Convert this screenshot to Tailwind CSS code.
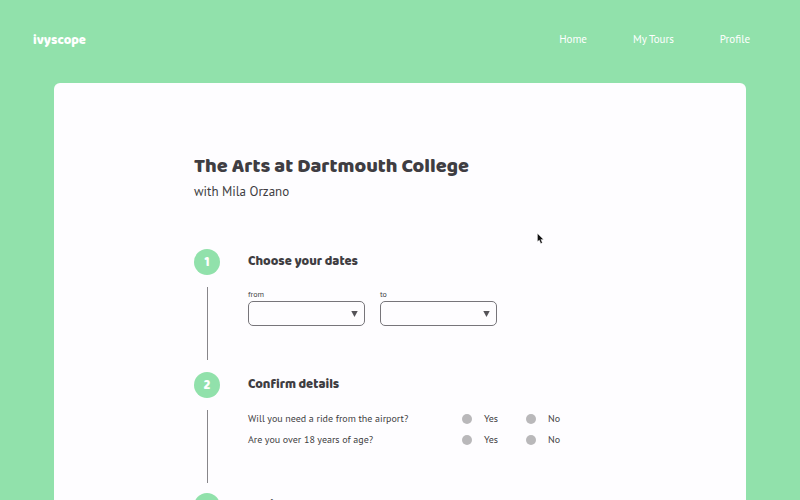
<!DOCTYPE html>
<html lang="en">
<head>
<meta charset="utf-8">
<meta name="viewport" content="width=device-width, initial-scale=1">
<title>ivyscope</title>
<script src="https://cdn.jsdelivr.net/npm/@tailwindcss/browser@4"></script>
</head>
<body class="relative flex h-screen flex-col overflow-hidden bg-[#91e1ab] font-['PT_Sans','Lato',sans-serif] text-[#3f3d42]">
<header class="flex items-center justify-between pt-[27px] pr-[50px] pb-8 pl-[33px] text-white">
  <a href="#" class="pt-[3px] font-['Baloo_2','Baloo','Lato',sans-serif] text-[13px] leading-5 font-extrabold">ivyscope</a>
  <nav class="flex gap-[46px] text-[11px] leading-6">
    <a href="#">Home</a>
    <a href="#">My Tours</a>
    <a href="#">Profile</a>
  </nav>
</header>
<main class="mx-[54px] grow rounded-t-md bg-[#fefdff] px-[140px] pt-[69px]">
  <h1 class="font-['Baloo_2','Baloo','Lato',sans-serif] text-[20px] leading-7 font-extrabold whitespace-nowrap">The Arts at Dartmouth College</h1>
  <p class="text-[13px] leading-6">with Mila Orzano</p>
  <ol class="mt-[45px]">
    <li class="flex h-[123px] gap-7">
      <div class="flex w-[26px] shrink-0 flex-col items-center gap-3">
        <span class="flex size-[26px] items-center justify-center rounded-full bg-[#91e1ab] pt-0.5 font-['Baloo_2','Baloo','Lato',sans-serif] text-[13px] font-extrabold text-white">1</span>
        <span class="h-[73px] w-px bg-[#88868a]"></span>
      </div>
      <section>
        <h2 class="pt-px font-['Baloo_2','Baloo','Lato',sans-serif] text-[13px] leading-6 font-extrabold">Choose your dates</h2>
        <div class="mt-[14px] flex gap-[15px]">
          <div class="relative w-[117px]">
            <label for="from" class="block text-[8px] leading-3">from</label>
            <select id="from" class="mt-px block h-[25px] w-full appearance-none rounded-[5px] border border-[#77757a] px-2 text-[11px]"><option></option></select>
            <svg class="pointer-events-none absolute right-[7px] bottom-[9px] h-[6px] w-[7px]" viewBox="0 0 7 6"><path d="M.3 0H6.7L3.5 6Z" fill="#555358"/></svg>
          </div>
          <div class="relative w-[117px]">
            <label for="to" class="block text-[8px] leading-3">to</label>
            <select id="to" class="mt-px block h-[25px] w-full appearance-none rounded-[5px] border border-[#77757a] px-2 text-[11px]"><option></option></select>
            <svg class="pointer-events-none absolute right-[7px] bottom-[9px] h-[6px] w-[7px]" viewBox="0 0 7 6"><path d="M.3 0H6.7L3.5 6Z" fill="#555358"/></svg>
          </div>
        </div>
      </section>
    </li>
    <li class="flex h-[121px] gap-7">
      <div class="flex w-[26px] shrink-0 flex-col items-center gap-3">
        <span class="flex size-[26px] items-center justify-center rounded-full bg-[#91e1ab] pt-0.5 font-['Baloo_2','Baloo','Lato',sans-serif] text-[13px] font-extrabold text-white">2</span>
        <span class="h-[73px] w-px bg-[#88868a]"></span>
      </div>
      <section>
        <h2 class="pt-px font-['Baloo_2','Baloo','Lato',sans-serif] text-[13px] leading-6 font-extrabold">Confirm details</h2>
        <div class="mt-[11px] text-[10px] leading-[21px]">
          <fieldset class="flex">
            <legend class="float-left w-[214px]">Will you need a ride from the airport?</legend>
            <label class="flex w-[64px] items-center gap-3"><input type="radio" name="ride" class="size-[10px] appearance-none rounded-full bg-[#b9b8ba] checked:bg-[#91e1ab]">Yes</label>
            <label class="flex items-center gap-3"><input type="radio" name="ride" class="size-[10px] appearance-none rounded-full bg-[#b9b8ba] checked:bg-[#91e1ab]">No</label>
          </fieldset>
          <fieldset class="flex">
            <legend class="float-left w-[214px]">Are you over 18 years of age?</legend>
            <label class="flex w-[64px] items-center gap-3"><input type="radio" name="age" class="size-[10px] appearance-none rounded-full bg-[#b9b8ba] checked:bg-[#91e1ab]">Yes</label>
            <label class="flex items-center gap-3"><input type="radio" name="age" class="size-[10px] appearance-none rounded-full bg-[#b9b8ba] checked:bg-[#91e1ab]">No</label>
          </fieldset>
        </div>
      </section>
    </li>
    <li class="flex gap-7">
      <span class="flex size-[26px] items-center justify-center rounded-full bg-[#91e1ab] pt-0.5 font-['Baloo_2','Baloo','Lato',sans-serif] text-[13px] font-extrabold text-white">3</span>
      <h2 class="pt-px font-['Baloo_2','Baloo','Lato',sans-serif] text-[13px] leading-6 font-extrabold">Review</h2>
    </li>
  </ol>
</main>
<svg class="pointer-events-none absolute top-[233px] left-[537px] h-[11px] w-[7px]" viewBox="0 0 7 11"><path d="M.5.5V8.5L2.3 7L3.8 10.5L5.3 9.8L3.8 6.5H6.5Z" fill="#111" stroke="#fff" stroke-width=".3"/></svg>
</body>
</html>
